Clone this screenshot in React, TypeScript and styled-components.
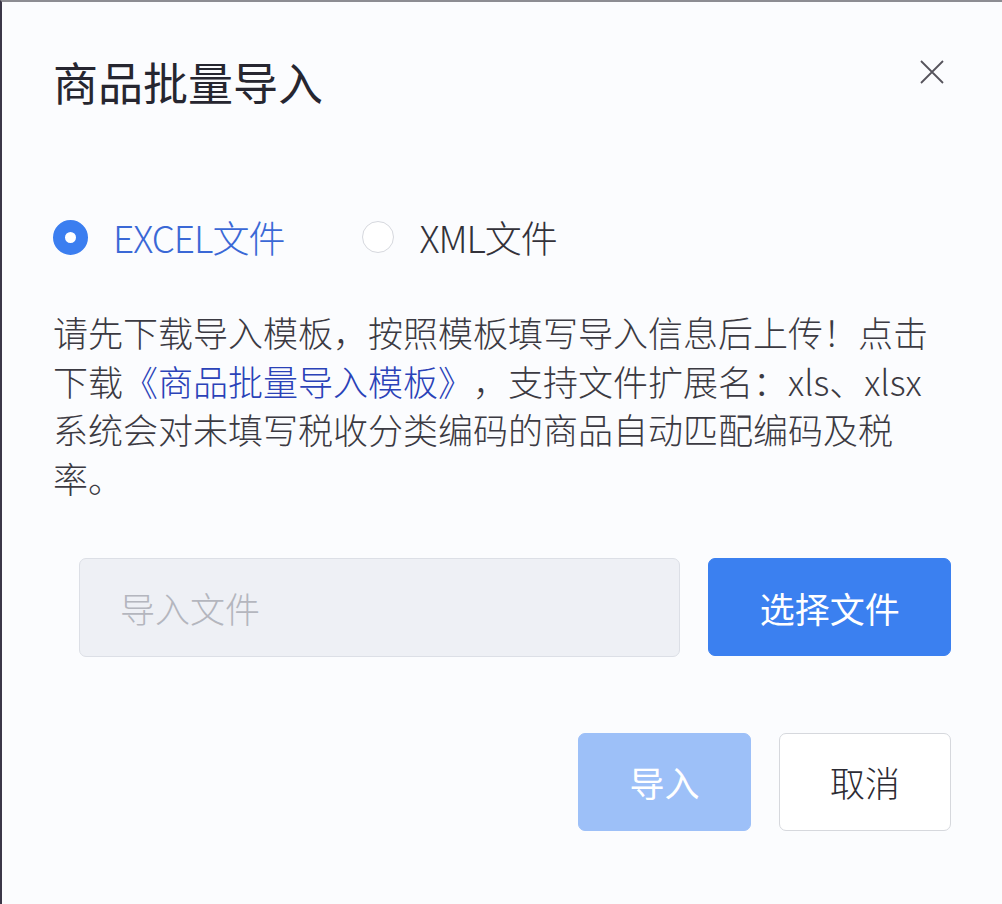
import React, { useState } from "react";
import styled, { createGlobalStyle } from "styled-components";

const GlobalStyle = createGlobalStyle`
  html, body {
    margin: 0;
    padding: 0;
    background: #ffffff;
  }
  body {
    font-family: "Noto Sans CJK SC", "Noto Sans", sans-serif;
  }
`;

const Frame = styled.div`
  width: 1002px;
  height: 904px;
  box-sizing: border-box;
  border-top: 2px solid #8c8c92;
  border-left: 2px solid #3b3748;
  background: #fbfcfe;
`;

const Dialog = styled.div`
  box-sizing: border-box;
  height: 100%;
  padding: 0 51px 0 51px;
  display: flex;
  flex-direction: column;
`;

const Header = styled.div`
  display: flex;
  justify-content: space-between;
  align-items: center;
  height: 60px;
  margin-top: 50px;
`;

const Title = styled.h2`
  margin: 0;
  font-size: 45px;
  font-weight: 400;
  line-height: 60px;
  color: #262630;
`;

const CloseButton = styled.button`
  background: none;
  border: none;
  padding: 0;
  margin: 0 7px 20px 0;
  width: 24px;
  height: 24px;
  cursor: pointer;
  display: flex;
  svg {
    display: block;
  }
`;

const RadioGroup = styled.div`
  display: flex;
  align-items: center;
  gap: 76px;
  margin-top: 100px;
  height: 50px;
`;

const RadioLabel = styled.label<{ $checked: boolean }>`
  display: flex;
  align-items: center;
  gap: 25px;
  font-size: 37px;
  line-height: 50px;
  letter-spacing: -1px;
  color: ${(p) => (p.$checked ? "#3a68d6" : "#33323a")};
  cursor: pointer;
  font-weight: 300;
`;

const RadioDot = styled.span<{ $checked: boolean }>`
  box-sizing: border-box;
  width: ${(p) => (p.$checked ? "35px" : "32px")};
  height: ${(p) => (p.$checked ? "35px" : "32px")};
  border-radius: 50%;
  margin-left: ${(p) => (p.$checked ? "0" : "2px")};
  border: ${(p) => (p.$checked ? "12px solid #3b7ef0" : "1px solid #d6d8de")};
  background: #ffffff;
  flex-shrink: 0;
`;

const Notice = styled.p`
  margin: 46px 0 0;
  width: 878px;
  font-size: 35px;
  line-height: 48.7px;
  color: #3b3a42;
  font-weight: 300;
  text-spacing-trim: space-all;
`;

const TemplateLink = styled.a`
  color: #2a42b8;
  text-decoration: none;
  cursor: pointer;
`;

const UploadRow = styled.div`
  display: flex;
  align-items: center;
  gap: 28px;
  margin: 55px 0 0 26px;
`;

const FileInput = styled.div`
  box-sizing: border-box;
  width: 602px;
  height: 99px;
  border: 1px solid #dcdfe6;
  border-radius: 7px;
  background: #eef0f5;
  display: flex;
  align-items: center;
  padding-left: 40px;
  font-size: 35px;
  font-weight: 300;
  color: #b4b6be;
`;

const Button = styled.button<{ $variant: "primary" | "disabled" | "plain"; $width: number }>`
  box-sizing: border-box;
  width: ${(p) => p.$width}px;
  height: 98px;
  border-radius: 7px;
  font-family: "Noto Sans CJK SC", "Noto Sans", sans-serif;
  font-size: 35px;
  font-weight: ${(p) => (p.$variant === "plain" ? 300 : 400)};
  cursor: ${(p) => (p.$variant === "disabled" ? "not-allowed" : "pointer")};
  border: 1px solid
    ${(p) => (p.$variant === "plain" ? "#d6d8dd" : p.$variant === "primary" ? "#3b80f0" : "#9dc0f8")};
  background: ${(p) =>
    p.$variant === "primary" ? "#3b80f0" : p.$variant === "disabled" ? "#9dc0f8" : "#ffffff"};
  color: ${(p) => (p.$variant === "plain" ? "#2c2b33" : "#ffffff")};
`;

const Footer = styled.div`
  display: flex;
  justify-content: flex-end;
  gap: 28px;
  margin-top: 76px;
`;

export default function App() {
  const [type, setType] = useState<"excel" | "xml">("excel");

  return (
    <>
      <GlobalStyle />
      <Frame>
        <Dialog>
          <Header>
            <Title>商品批量导入</Title>
            <CloseButton aria-label="关闭">
              <svg width="24" height="24" viewBox="0 0 24 24">
                <path d="M1 1 L23 23 M23 1 L1 23" stroke="#55535c" strokeWidth="1.8" fill="none" />
              </svg>
            </CloseButton>
          </Header>

          <RadioGroup>
            <RadioLabel $checked={type === "excel"} onClick={() => setType("excel")}>
              <RadioDot $checked={type === "excel"} />
              EXCEL文件
            </RadioLabel>
            <RadioLabel $checked={type === "xml"} onClick={() => setType("xml")}>
              <RadioDot $checked={type === "xml"} />
              XML文件
            </RadioLabel>
          </RadioGroup>

          <Notice>
            请先下载导入模板，按照模板填写导入信息后上传！点击下载
            <TemplateLink>《商品批量导入模板》</TemplateLink>
            ，支持文件扩展名：xls、xlsx系统会对未填写税收分类编码的商品自动匹配编码及税率。
          </Notice>

          <UploadRow>
            <FileInput>导入文件</FileInput>
            <Button $variant="primary" $width={243}>选择文件</Button>
          </UploadRow>

          <Footer>
            <Button $variant="disabled" $width={173}>导入</Button>
            <Button $variant="plain" $width={172}>取消</Button>
          </Footer>
        </Dialog>
      </Frame>
    </>
  );
}
